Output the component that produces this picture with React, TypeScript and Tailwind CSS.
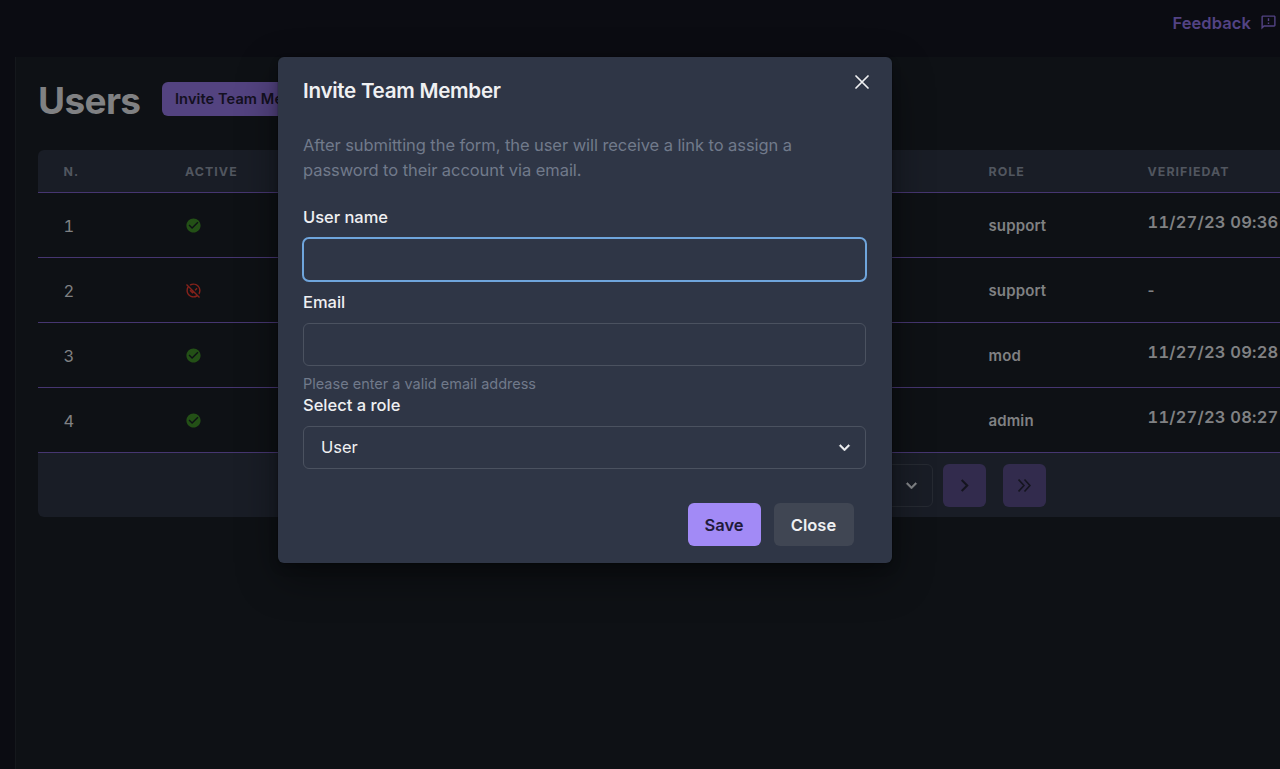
import React from "react";
import { MdCheckCircle, MdOutlineFeedback, MdOutlineUnpublished } from "react-icons/md";

type User = { n: number; active: boolean; role: string; verifiedAt: string | null };

const users: User[] = [
  { n: 1, active: true, role: "support", verifiedAt: "11/27/23 09:36" },
  { n: 2, active: false, role: "support", verifiedAt: null },
  { n: 3, active: true, role: "mod", verifiedAt: "11/27/23 09:28" },
  { n: 4, active: true, role: "admin", verifiedAt: "11/27/23 08:27" },
];

const columns = "grid grid-cols-[121.5px_803.5px_159px_300px] pl-[25.5px]";

function ChevronDown({ className }: { className: string }) {
  return (
    <svg viewBox="0 0 24 24" className={className} fill="currentColor" stroke="currentColor" strokeWidth="0.5">
      <path d="M16.59 8.59L12 13.17 7.41 8.59 6 10l6 6 6-6z" />
    </svg>
  );
}

function TopBar() {
  return (
    <header className="flex h-[57px] shrink-0 items-start justify-end pt-[10px] pr-[3px]">
      <a className="flex items-center text-[16.5px] leading-[26px] font-semibold tracking-[0.08px] whitespace-nowrap text-[#534384]">
        Feedback
        <MdOutlineFeedback className="ml-[9px] size-[17px] -translate-y-px" />
      </a>
    </header>
  );
}

function UsersTable() {
  return (
    <div className="mt-[33px] w-[1384px] overflow-hidden rounded-md">
      <div className={`${columns} h-[43px] items-center border-b border-[#463671] bg-[#191d26] pt-[2px] text-[12.4px] font-bold tracking-[1.05px] text-[#51565f]`}>
        <span>N.</span>
        <span>ACTIVE</span>
        <span>ROLE</span>
        <span>VERIFIEDAT</span>
      </div>
      {users.map((user) => (
        <div key={user.n} className={`${columns} h-[65px] items-center border-b border-[#463671] text-[#808183]`}>
          <span className="pt-[3px] text-[16.5px] tabular-nums">{user.n}</span>
          <span className="-ml-[0.5px]">
            {user.active ? (
              <MdCheckCircle className="size-[17px] text-[#235016]" />
            ) : (
              <MdOutlineUnpublished className="size-[17px] text-[#85221b]" />
            )}
          </span>
          <span className="pt-[2px] text-[15px] font-semibold tracking-[0.12px]">{user.role}</span>
          {user.verifiedAt ? (
            <span className="pb-[5px] text-[16.5px] font-semibold tracking-[0.2px] whitespace-nowrap tabular-nums">{user.verifiedAt}</span>
          ) : (
            <span className="pt-[2px] text-[15px] font-semibold">-</span>
          )}
        </div>
      ))}
      <div className="flex h-[64px] bg-[#191d26] pt-[11px] pl-[780px]">
        <div className="flex h-[43px] w-[115px] items-center justify-end rounded-md border border-[#262a32] pr-[10px] text-[#85878a]">
          <ChevronDown className="size-[21px]" />
        </div>
        <button className="ml-[10px] flex size-[43px] items-center justify-center rounded-md bg-[#322b4d] text-[#15151f]">
          <svg viewBox="0 0 24 24" className="size-[25px]" fill="currentColor">
            <path d="M10 6L8.59 7.41 13.17 12l-4.58 4.59L10 18l6-6z" />
          </svg>
        </button>
        <button className="ml-[17px] flex size-[43px] items-center justify-center rounded-md bg-[#322b4d] text-[#15151f]">
          <svg viewBox="0 0 24 24" className="size-[13px]" fill="none" stroke="currentColor" strokeWidth="3">
            <path d="M1 1l10 11L1 23M12 1l10 11-10 11" />
          </svg>
        </button>
      </div>
    </div>
  );
}

function InviteDialog() {
  return (
    <div
      role="dialog"
      className="absolute top-[56.5px] left-[277.5px] flex h-[506px] w-[614px] flex-col rounded-md bg-[#2f3646] pt-[17px] pr-[25px] pl-[25.5px] text-[#eff0f2] shadow-[0_0_0_1px_rgba(0,0,0,0.1),0_5px_10px_rgba(0,0,0,0.2),0_15px_40px_rgba(0,0,0,0.4)]"
    >
      <div className="flex h-[58px] items-start justify-between">
        <h2 className="text-[20.6px] leading-[33px] font-semibold tracking-[-0.28px]">Invite Team Member</h2>
        <button className="-mr-[2px] pt-[1.5px]">
          <svg viewBox="0 0 14 14" className="size-[14px]" fill="none" stroke="currentColor" strokeWidth="1.7" strokeLinecap="round">
            <path d="M1 1l12 12M13 1L1 13" />
          </svg>
        </button>
      </div>
      <p className="pt-[1px] text-[16.5px] leading-[25.5px] tracking-[-0.07px] text-[#717a8b]">
        After submitting the form, the user will receive a link to assign a<br />
        password to their account via email.
      </p>
      <label className="mt-[20px] text-[16.5px] leading-[26px] font-medium tracking-[-0.03px]">User name</label>
      <div className="mt-[7px] -ml-px h-[45px] w-[565px] rounded-[7px] border-2 border-[#6fa5dc]" />
      <label className="mt-[7px] text-[16.5px] leading-[26px] font-medium tracking-[-0.03px]">Email</label>
      <div className="mt-[8px] h-[43px] w-[563px] rounded-md border border-[#4b5260]" />
      <p className="mt-[9px] text-[14.5px] leading-[18px] text-[#717a8b]">Please enter a valid email address</p>
      <label className="text-[16.5px] leading-[25px] font-medium">Select a role</label>
      <div className="mt-[8px] flex h-[43px] w-[563px] items-center justify-between rounded-md border border-[#4b5260] pr-[10px] pl-[17px] text-[16.5px]">
        <span className="pt-px">User</span>
        <ChevronDown className="size-[21px]" />
      </div>
      <div className="mt-[34px] flex justify-end gap-[13px] pr-[13px] text-[16.5px] font-semibold">
        <button className="h-[43px] w-[73px] rounded-md bg-[#a28af6] pt-[2px] text-[#211b3b]">Save</button>
        <button className="h-[43px] w-[80px] rounded-md bg-[#404653] pt-[2px]">Close</button>
      </div>
    </div>
  );
}

export default function App() {
  return (
    <div className="relative flex h-[769px] w-[1280px] flex-col overflow-hidden bg-[#0b0c12] font-['Inter',sans-serif]">
      <TopBar />
      <div className="flex flex-1">
        <aside className="w-[16px] shrink-0 border-r border-[#15181c]" />
        <main className="min-w-0 flex-1 overflow-hidden bg-[#0e1115] pt-[25px] pl-[22px]">
          <div className="flex h-[35px] items-start">
            <h1 className="w-[124px] text-[37px] leading-[38px] font-bold tracking-[-0.65px] text-[#808183]">Users</h1>
            <button className="h-[34px] w-[170px] rounded-md bg-[#534380] pt-px pl-[13px] text-left text-[14.6px] font-semibold tracking-[0.08px] whitespace-nowrap text-[#131020]">
              Invite Team Member
            </button>
          </div>
          <UsersTable />
        </main>
      </div>
      <InviteDialog />
    </div>
  );
}
